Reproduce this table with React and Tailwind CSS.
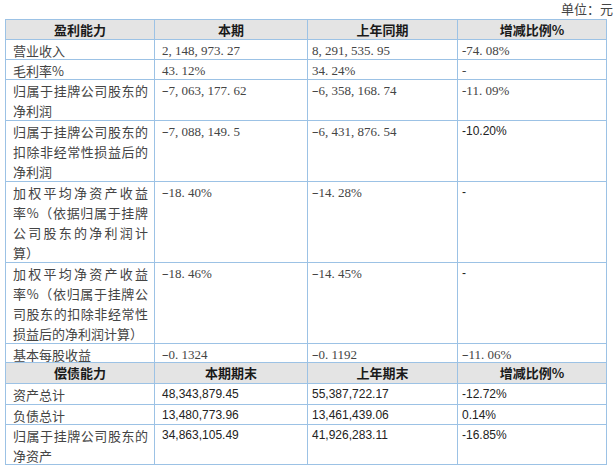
import React from 'react';

const cjk = "font-['Noto_Sans_CJK_SC',sans-serif]";
const serif = "font-['Liberation_Serif','Noto_Sans_CJK_SC',serif]";
const sans = "font-['Liberation_Sans','Noto_Sans_CJK_SC',sans-serif]";

// SimSun-style numbers: punctuation takes a half-em cell
function Num({ v, longDash = true }) {
  return v.split('').map((c, i) => {
    if (c === '-') {
      if (!longDash) return c;
      return (
        <span key={i} className="inline-block w-[0.5em] text-center">
          <span className="inline-block scale-x-[1.6]">{c}</span>
        </span>
      );
    }
    if (c === ',' || c === '.') {
      return <span key={i} className="inline-block w-[0.5em]">{c}</span>;
    }
    return c;
  });
}

function Label({ lines }) {
  return (
    <div className={`pl-[7px] pr-[6px] pt-px text-[13px] leading-[20px] text-[#444] ${cjk}`}>
      {lines.map((l, i) => (
        <div
          key={i}
          className={i < lines.length - 1 ? 'text-justify [text-align-last:justify]' : ''}
        >
          {l}
        </div>
      ))}
    </div>
  );
}

function Head({ children }) {
  return (
    <div className={`bg-[#e4e4e4] text-center text-[13px] leading-[19px] font-bold text-[#1a1a1a] ${cjk}`}>
      {children}
    </div>
  );
}

function Val({ v, pad = 'pl-[4px]' }) {
  // S: sans (Calibri-like) text, H: serif with short hyphen
  if (v.startsWith('S')) {
    return (
      <div className={`bg-white ${pad} pt-px text-[12px] leading-[19px] text-[#222] ${sans}`}>{v.slice(1)}</div>
    );
  }
  const short = v.startsWith('H');
  return (
    <div className={`bg-white ${pad} pt-px text-[13px] leading-[19px] text-[#444] ${serif}`}>
      <Num v={short ? v.slice(1) : v} longDash={!short} />
    </div>
  );
}

const top = [
  [['营业收入'], '2,148,973.27', '8,291,535.95', 'H-74.08%'],
  [['毛利率%'], '43.12%', '34.24%', 'H-'],
  [['归属于挂牌公司股东的', '净利润'], '-7,063,177.62', '-6,358,168.74', 'H-11.09%'],
  [['归属于挂牌公司股东的', '扣除非经常性损益后的', '净利润'], '-7,088,149.5', '-6,431,876.54', 'S-10.20%'],
  [['加权平均净资产收益', '率%（依据归属于挂牌', '公司股东的净利润计', '算）'], '-18.40%', '-14.28%', 'S-'],
  [['加权平均净资产收益', '率%（依归属于挂牌公', '司股东的扣除非经常性', '损益后的净利润计算）'], '-18.46%', '-14.45%', 'S-'],
  [['基本每股收益'], '-0.1324', '-0.1192', '-11.06%'],
];

const bottom = [
  [['资产总计'], 'S48,343,879.45', 'S55,387,722.17', 'S-12.72%'],
  [['负债总计'], 'S13,480,773.96', 'S13,461,439.06', 'S0.14%'],
  [['归属于挂牌公司股东的', '净资产'], 'S34,863,105.49', 'S41,926,283.11', 'S-16.85%'],
];

function Rows({ rows }) {
  return rows.map((r, i) => (
    <React.Fragment key={i}>
      <div className="bg-white"><Label lines={r[0]} /></div>
      <Val v={r[1]} pad="pl-[7px]" />
      <Val v={r[2]} />
      <Val v={r[3]} />
    </React.Fragment>
  ));
}

export default function App() {
  return (
    <div className="w-[614px] h-[470px] bg-white overflow-hidden">
      <div className={`h-[19px] text-right text-[13px] leading-[18px] text-[#444] pr-px ${cjk}`}>单位：元</div>
      <div className="ml-[5px] w-[602px] grid grid-cols-[148px_152px_149px_148px] grid-rows-[19px_19px_19px_40px_60px_80px_80px_18px_20px_20px_19px_39px] gap-px p-px bg-[#9cc2e5]">
        <Head>盈利能力</Head>
        <Head>本期</Head>
        <Head>上年同期</Head>
        <Head>增减比例%</Head>
        <Rows rows={top} />
        <Head>偿债能力</Head>
        <Head>本期期末</Head>
        <Head>上年期末</Head>
        <Head>增减比例%</Head>
        <Rows rows={bottom} />
      </div>
    </div>
  );
}
